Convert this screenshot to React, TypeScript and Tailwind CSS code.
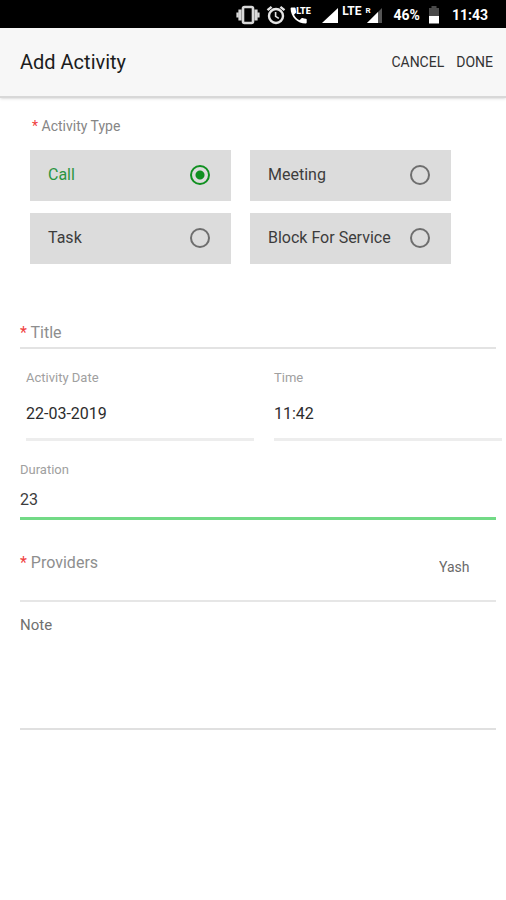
import { useState } from 'react';

const activityTypes = ['Call', 'Meeting', 'Task', 'Block For Service'];

function StatusBar() {
    return (
        <div className="flex h-7 items-center justify-end bg-black pr-[18px] pt-0.5 text-white">
            {/* Vibrate */}
            <svg className="h-5 w-6" viewBox="0 0 24 20" fill="none" stroke="#d8d8d8" strokeWidth="2">
                <rect x="7" y="2" width="10" height="16" rx="1.5" strokeWidth="2.6" />
                <path d="M4 4.5v11M20 4.5v11" strokeWidth="3.2" />
                <path d="M1.6 7.5v5M22.4 7.5v5" strokeWidth="2.4" />
            </svg>

            {/* Alarm */}
            <svg className="ml-1.5 h-5 w-5" viewBox="0 0 20 20" fill="none" stroke="#e4e4e4" strokeWidth="2.4">
                <circle cx="10" cy="11" r="7" />
                <path d="M1.5 5.2 5.6 1.8M18.5 5.2l-4.1-3.4" />
                <path d="M9.6 7v4.4l3.2 2" strokeWidth="1.6" />
            </svg>

            {/* Call over LTE */}
            <div className="relative ml-1 h-5 w-6">
                <svg className="h-5 w-6" viewBox="0 0 24 20" fill="#fff">
                    <path d="M1.5 2.5h3.2c.5 0 .8.3.9.8.1 1.2.3 2.3.7 3.4.1.3 0 .7-.3 1L4 9.8c1.3 2.5 3 4.2 5.5 5.5l2-2c.3-.3.7-.4 1-.2 1.1.3 2.2.5 3.4.6.5 0 .8.4.8.9v3c0 .5-.4.9-.9.9C7.5 18.5.6 11.7.6 3.4c0-.5.4-.9.9-.9z" />
                </svg>
                <span className="absolute left-1.5 top-0.5 text-[9px] leading-[9px] font-black">LTE</span>
            </div>

            <svg className="ml-2 h-5 w-4" viewBox="0 0 16 20" fill="#fff">
                <path d="M0 18 16 3v15z" />
            </svg>
            <span className="ml-1 self-start pt-px text-xs leading-4 font-bold">LTE</span>

            {/* Second sim, roaming */}
            <div className="relative ml-1 h-5 w-4">
                <svg className="h-5 w-4" viewBox="0 0 16 20">
                    <path d="M1 18 16 3v15z" fill="#555" />
                    <path d="M1 18 12 7v11z" fill="#fff" />
                </svg>
                <span className="absolute left-0 top-0.5 text-[8px] leading-[8px] font-bold">R</span>
            </div>

            <span className="ml-3 text-sm font-bold">46%</span>

            <svg className="ml-2 h-5 w-3" viewBox="0 0 12 20">
                <path d="M3.5 1h5v2H11v8H1V3h2.5z" fill="#4a4a4a" />
                <path d="M1 11h10v7.5H1z" fill="#fff" />
            </svg>

            <span className="ml-3 text-sm font-bold">11:43</span>
        </div>
    );
}

export default function App() {
    const [type, setType] = useState('Call');

    return (
        <div className="min-h-screen bg-white font-[Roboto,sans-serif] text-[#333]">
            <StatusBar />

            <header className="flex h-[70px] items-center justify-between border-b-2 border-[#d8d8d8] bg-[#f7f7f7] pl-5 pr-[13px] shadow-sm">
                <h1 className="text-xl text-[#1c1c1c]">Add Activity</h1>
                <div className="flex gap-3 text-sm text-[#333]">
                    <button type="button">CANCEL</button>
                    <button type="button">DONE</button>
                </div>
            </header>

            <form>
                {/* Activity type */}
                <div role="radiogroup" aria-labelledby="type-label" className="pl-[30px] pr-[55px] pt-[18px]">
                    <p id="type-label" className="pl-0.5 text-sm text-[#868686]">
                        <span className="text-[#f04040]">*</span> Activity Type
                    </p>
                    <div className="mt-3.5 grid grid-cols-2 gap-x-[19px] gap-y-3">
                        {activityTypes.map((name) => (
                            <label
                                key={name}
                                className={`flex h-[51px] items-center justify-between bg-[#dcdcdc] pb-0.5 pl-[18px] pr-[21px] text-base ${type === name ? 'text-[#2a9540]' : 'text-[#3c3c3c]'}`}
                            >
                                {name}
                                <input
                                    type="radio"
                                    name="activityType"
                                    value={name}
                                    checked={type === name}
                                    onChange={() => setType(name)}
                                    className="size-5 shrink-0 appearance-none rounded-full border-2 border-[#6e6e6e] checked:border-[#109020] checked:bg-[radial-gradient(circle,#109020_4px,transparent_5px)]"
                                />
                            </label>
                        ))}
                    </div>
                </div>

                <div className="ml-5 mr-2.5 mt-[57px] flex items-center gap-2 border-b-2 border-[#e3e3e3] pb-0.5">
                    <label htmlFor="title" className="text-base text-[#8e8e8e]">
                        <span className="text-[#f04040]">*</span> Title
                    </label>
                    <input id="title" type="text" className="min-w-0 flex-1 outline-none" />
                </div>

                {/* Date and time */}
                <div className="ml-[26px] mr-1 mt-[19px] grid grid-cols-2 gap-5">
                    <div className="border-b-[3px] border-[#ededed] pb-3">
                        <label htmlFor="date" className="block text-[13px] leading-5 text-[#a0a0a0]">Activity Date</label>
                        <input id="date" type="text" defaultValue="22-03-2019" className="mt-3.5 block w-full text-base text-[#2c2c2c] outline-none" />
                    </div>
                    <div className="border-b-[3px] border-[#ededed] pb-3">
                        <label htmlFor="time" className="block text-[13px] leading-5 text-[#a0a0a0]">Time</label>
                        <input id="time" type="text" defaultValue="11:42" className="mt-3.5 block w-full text-base text-[#2c2c2c] outline-none" />
                    </div>
                </div>

                <div className="ml-5 mr-2.5 mt-[19px] border-b-[3px] border-[#72da86] pb-[5px]">
                    <label htmlFor="duration" className="block text-[13px] leading-5 text-[#a0a0a0]">Duration</label>
                    <input id="duration" type="text" defaultValue="23" className="mt-2 block w-full text-base text-[#3c3c3c] outline-none" />
                </div>

                <div className="ml-5 mr-2.5 mt-[31px] flex h-[51px] items-start justify-between border-b-2 border-[#e6e6e6] pr-[26px]">
                    <label htmlFor="providers" className="text-base text-[#8e8e8e]">
                        <span className="text-[#f04040]">*</span> Providers
                    </label>
                    <select id="providers" className="mt-1.5 appearance-none text-sm text-[#6a6a6a] outline-none">
                        <option>Yash</option>
                    </select>
                </div>

                <div className="ml-5 mr-2.5 mt-[11px] border-b-2 border-[#e0e0e0]">
                    <label htmlFor="note" className="block text-[15px] leading-6 text-[#707070]">Note</label>
                    <textarea id="note" className="block h-[91px] w-full resize-none outline-none" />
                </div>
            </form>
        </div>
    );
}
